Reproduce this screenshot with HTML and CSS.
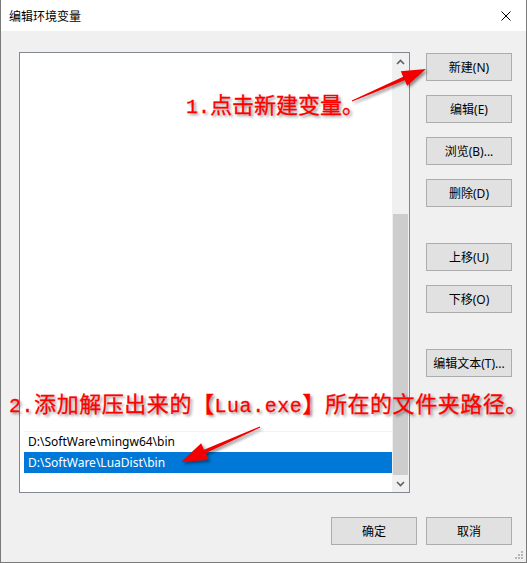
FILE: index.html
```html
<!DOCTYPE html>
<html lang="zh-CN">
<head>
    <meta charset="UTF-8">
    <title>编辑环境变量</title>
    <link rel="stylesheet" href="styles.css">
</head>
<body>
    <div class="window">
        <div class="title-bar">
            <span class="title">编辑环境变量</span>
            <svg class="close" width="10" height="10" viewBox="0 0 10 10">
                <path d="M0.5 0.5 L9.5 9.5 M9.5 0.5 L0.5 9.5" stroke="#000" stroke-width="1" fill="none"/>
            </svg>
        </div>

        <div class="content">
            <div class="main">
                <div class="list-box">
                    <div class="items">
                        <div class="row">D:\SoftWare\mingw64\bin</div>
                        <div class="row selected">D:\SoftWare\LuaDist\bin</div>
                    </div>
                    <div class="scrollbar">
                        <div class="scroll-btn">
                            <svg width="9" height="6" viewBox="0 0 9 6"><path d="M1 5 L4.5 1.5 L8 5" stroke="#606060" stroke-width="1.6" fill="none"/></svg>
                        </div>
                        <div class="track"><div class="thumb"></div></div>
                        <div class="scroll-btn">
                            <svg width="9" height="6" viewBox="0 0 9 6"><path d="M1 1 L4.5 4.5 L8 1" stroke="#606060" stroke-width="1.6" fill="none"/></svg>
                        </div>
                    </div>
                </div>

                <div class="side-buttons">
                    <button class="btn">新建(N)</button>
                    <button class="btn">编辑(E)</button>
                    <button class="btn">浏览(B)...</button>
                    <button class="btn">删除(D)</button>
                    <button class="btn wide-gap">上移(U)</button>
                    <button class="btn">下移(O)</button>
                    <button class="btn wide-gap">编辑文本(T)...</button>
                </div>
            </div>

            <div class="footer">
                <button class="btn">确定</button>
                <button class="btn">取消</button>
            </div>
        </div>

        <!-- 标注 -->
        <div class="note note-1"><span class="lat">1.</span>点击新建变量。</div>
        <div class="note note-2"><span class="lat">2.</span>添加解压出来的【<span class="lat">Lua.exe</span>】所在的文件夹路径。</div>

        <svg class="arrows" width="527" height="563" viewBox="0 0 527 563">
            <defs>
                <filter id="shadow" x="-20%" y="-20%" width="140%" height="140%">
                    <feDropShadow dx="2" dy="2" stdDeviation="1.5" flood-color="#000" flood-opacity="0.45"/>
                </filter>
            </defs>
            <polygon filter="url(#shadow)" fill="#f20000"
                points="351.8,100.5 403.2,76.7 400.8,71.2 426,69 407.2,85.8 404.8,80.3 352.2,101.5"/>
            <polygon filter="url(#shadow)" fill="#f20000"
                points="260.3,427.6 205.6,453.3 208.4,459.7 181,462 201.2,443.3 204,449.7 259.7,426.4"/>
        </svg>

        <svg class="grip" width="8" height="8" viewBox="0 0 8 8">
            <rect x="6" y="0" width="2" height="2" fill="#b8b8b8"/>
            <rect x="3" y="3" width="2" height="2" fill="#b8b8b8"/>
            <rect x="6" y="3" width="2" height="2" fill="#b8b8b8"/>
            <rect x="0" y="6" width="2" height="2" fill="#b8b8b8"/>
            <rect x="3" y="6" width="2" height="2" fill="#b8b8b8"/>
            <rect x="6" y="6" width="2" height="2" fill="#b8b8b8"/>
        </svg>
    </div>
</body>
</html>
```

FILE: styles.css
```css
/* 编辑环境变量 窗口 */
* {
    margin: 0;
    padding: 0;
    box-sizing: border-box;
}

body {
    font-family: "Noto Sans", "Noto Sans CJK SC", sans-serif;
    font-size: 12px;
    color: #000;
    background: #fff;
}

.window {
    position: relative;
    width: 527px;
    height: 563px;
    background: #f0f0f0;
    border: 1px solid #7a7a7a;
    border-top: none;
    overflow: hidden;
}

.title-bar {
    height: 31px;
    background: #fff;
    display: flex;
    align-items: center;
    justify-content: space-between;
    padding: 0 15px 0 8px;
}

.title {
    font-family: "Noto Sans CJK SC", sans-serif;
    font-size: 12px;
}

.content {
    padding: 21px 14px 0 18px;
}

.main {
    display: flex;
    gap: 16px;
}

.list-box {
    width: 391px;
    height: 441px;
    background: #fff;
    border: 1px solid #828790;
    display: flex;
}

.items {
    flex: 1;
    padding: 378px 0 0 4px;
}

.row {
    height: 21px;
    line-height: 20px;
    padding-left: 4px;
    border-top: 1px solid #f3f3f3;
    white-space: nowrap;
}

.row.selected {
    background: #0078d7;
    color: #fff;
    border-top-color: #0078d7;
}

.scrollbar {
    width: 17px;
    background: #f0f0f0;
    display: flex;
    flex-direction: column;
}

.scroll-btn {
    height: 17px;
    display: flex;
    align-items: center;
    justify-content: center;
}

.track {
    flex: 1;
    display: flex;
    flex-direction: column;
    justify-content: flex-end;
}

.thumb {
    height: 261px;
    margin: 0 1px;
    background: #cdcdcd;
}

.side-buttons {
    display: flex;
    flex-direction: column;
    gap: 14px;
    padding-top: 1px;
}

.btn {
    width: 86px;
    height: 28px;
    background: #e1e1e1;
    border: 1px solid #adadad;
    font-family: "Noto Sans", "Noto Sans CJK SC", sans-serif;
    font-size: 12px;
    color: #000;
    white-space: nowrap;
    padding: 0;
}

.btn.wide-gap {
    margin-top: 22px;
}

.footer {
    display: flex;
    justify-content: flex-end;
    gap: 9px;
    margin-top: 24px;
}

/* 红色标注 */
.note {
    position: absolute;
    font-family: "Noto Sans CJK SC", sans-serif;
    font-size: 22px;
    color: #f00;
    line-height: 28px;
    white-space: nowrap;
    -webkit-text-stroke: 0.3px #f00;
    text-shadow: 2px 2px 3px rgba(0, 0, 0, 0.45);
}

.note .lat {
    font-family: "Liberation Mono", monospace;
    font-size: 20px;
}

.note-1 {
    left: 185px;
    top: 89px;
}

.note-2 {
    left: 8px;
    top: 388px;
    letter-spacing: 0.55px;
}

.arrows {
    position: absolute;
    left: -1px;
    top: 0;
    pointer-events: none;
}

.grip {
    position: absolute;
    right: 3px;
    bottom: 3px;
}
```
